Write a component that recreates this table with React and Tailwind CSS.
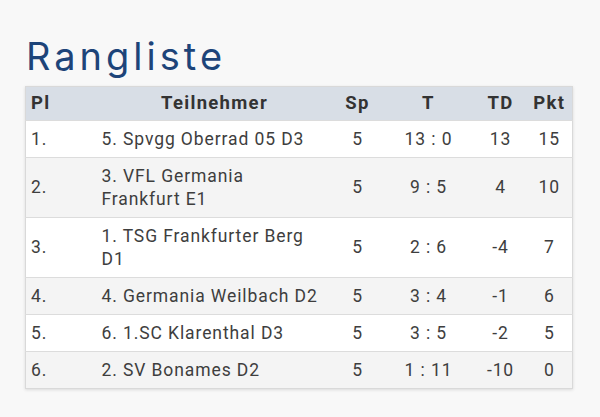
export default function App() {
  const rows = [
    ["1.", "5. Spvgg Oberrad 05 D3", "5", "13 : 0", "13", "15"],
    ["2.", "3. VFL Germania Frankfurt E1", "5", "9 : 5", "4", "10"],
    ["3.", "1. TSG Frankfurter Berg D1", "5", "2 : 6", "-4", "7"],
    ["4.", "4. Germania Weilbach D2", "5", "3 : 4", "-1", "6"],
    ["5.", "6. 1.SC Klarenthal D3", "5", "3 : 5", "-2", "5"],
    ["6.", "2. SV Bonames D2", "5", "1 : 11", "-10", "0"],
  ];
  return (
    <div className="w-[600px] h-[417px] bg-[#f8f8f8] overflow-hidden pl-[25px] pt-[30px]">
      <h1 className="text-[38px] leading-[52px] text-[#1d4479] font-normal tracking-[4px] mb-[4px] pl-[1px]" style={{ fontFamily: "Inter, 'Open Sans', sans-serif" }}>
        Rangliste
      </h1>
      <table
        className="w-[547px] table-fixed border-collapse border border-[#d9d9d9] shadow-[0_1px_3px_rgba(0,0,0,0.12)] text-[17.5px] tracking-[0.9px] leading-[23px] text-[#3e3e3e]"
        style={{ fontFamily: "Roboto, 'Liberation Sans', sans-serif" }}
      >
        <colgroup>
          <col className="w-[71px]" />
          <col className="w-[236px]" />
          <col className="w-[50px]" />
          <col className="w-[92px]" />
          <col className="w-[52px]" />
          <col className="w-[46px]" />
        </colgroup>
        <thead>
          <tr className="bg-[#d8dee6] text-[#333] h-[34px] text-[18.5px] tracking-[1.3px]">
            <th className="text-left px-[5px] py-[5px] font-bold">Pl</th>
            <th className="text-center px-[5px] py-[5px] font-bold">Teilnehmer</th>
            <th className="text-center px-[2px] py-[5px] font-bold">Sp</th>
            <th className="text-center px-[2px] py-[5px] font-bold">T</th>
            <th className="text-center px-[2px] py-[5px] font-bold">TD</th>
            <th className="text-center px-[2px] py-[5px] font-bold">Pkt</th>
          </tr>
        </thead>
        <tbody>
          {rows.map((r, i) => (
            <tr key={i} className={(i % 2 === 0 ? "bg-white" : "bg-[#f4f4f4]") + " border-t border-[#dcdcdc]"}>
              <td className="px-[5px] py-[6.5px] align-middle">{r[0]}</td>
              <td className="px-[5px] py-[6.5px] align-middle">{r[1]}</td>
              <td className="px-[2px] py-[6.5px] text-center align-middle">{r[2]}</td>
              <td className="px-[2px] py-[6.5px] text-center align-middle">{r[3]}</td>
              <td className="px-[2px] py-[6.5px] text-center align-middle">{r[4]}</td>
              <td className="px-[2px] py-[6.5px] text-center align-middle">{r[5]}</td>
            </tr>
          ))}
        </tbody>
      </table>
    </div>
  );
}
